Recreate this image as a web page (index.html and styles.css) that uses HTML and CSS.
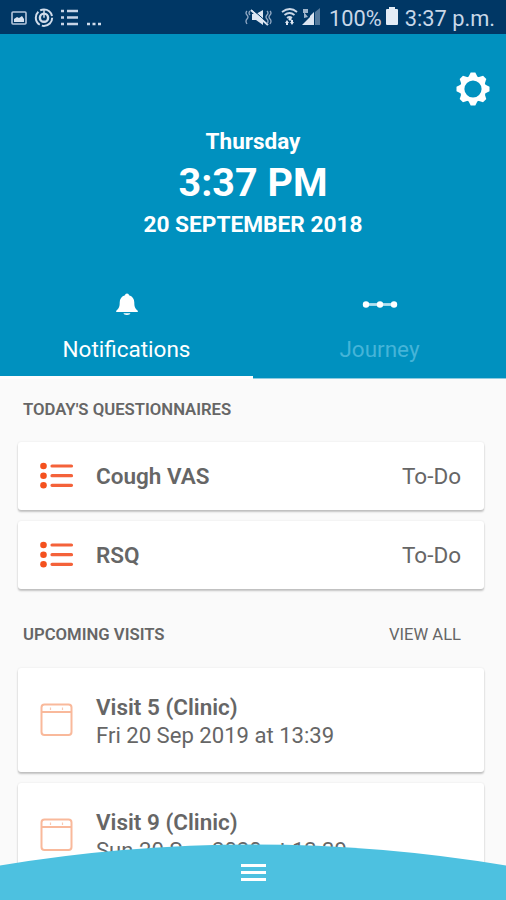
FILE: index.html
```html
<!DOCTYPE html>
<html lang="en">
<head>
<meta charset="utf-8">
<title>Notifications</title>
<link rel="stylesheet" href="styles.css">
</head>
<body>
<svg class="defs" width="0" height="0">
  <symbol id="list" viewBox="0 0 34 28">
    <g fill="#f4511e"><circle cx="3.5" cy="4" r="3.3"/><circle cx="3.5" cy="13.7" r="3.3"/><circle cx="3.5" cy="23.3" r="3.3"/></g>
    <path d="M12 4H31.5M12 13.7H31.5M12 23.3H31.5" stroke="#f4623a" stroke-width="3.2" stroke-linecap="round"/>
  </symbol>
  <symbol id="calendar" viewBox="0 0 34 34">
    <rect x="1.5" y="1.5" width="30" height="30.5" rx="3" fill="none" stroke="#f9b99b" stroke-width="2"/>
    <path d="M1.5 9H31.5" stroke="#f9b99b" stroke-width="2"/>
    <path d="M10.5 4.5V7M22.5 4.5V7" stroke="#f9c9b3" stroke-width="1.2"/>
  </symbol>
</svg>
<div class="screen">
  <div class="status">
    <svg class="status-left" width="110" height="34" viewBox="0 0 110 34">
      <rect x="12" y="12" width="14" height="12" rx="1" fill="none" stroke="#b4c6dc" stroke-width="1.6"/>
      <path d="M14 22v-3l3-2 2 1 3-2 2 3v3z" fill="#d7e2f0"/>
      <circle cx="44" cy="17.7" r="8.2" fill="none" stroke="#d0dceb" stroke-width="2" stroke-dasharray="15 2.2"/>
      <circle cx="44" cy="17.7" r="4.1" fill="none" stroke="#d0dceb" stroke-width="2.4"/>
      <path d="M44 17.7V10" stroke="#d0dceb" stroke-width="1.5"/>
      <path d="M61 11h3M61 17.5h3M61 24h3M67 11h11M67 17.5h11M67 24h11" stroke="#c7d4e6" stroke-width="2.6"/>
      <path d="M87 24h3M92.500 24h3M98 24h3" stroke="#d0dceb" stroke-width="2.6"/>
    </svg>
    <svg class="status-signal" width="78" height="34" viewBox="0 0 78 34">
      <g fill="#dce6f2">
        <path d="M7 14h4l7-4v15l-7-5H7z"/>
        <path d="M6 10L23 25" stroke="#dce6f2" stroke-width="2.2"/>
        <path d="M7 9L24 24" stroke="#003765" stroke-width="1"/>
        <path d="M2 11q-2 2 0 4t0 4 0 5M5 11q-2 2 0 4M22 11q2 2 0 4t0 4 0 5M25 11q2 2 0 4t0 4 0 5" fill="none" stroke="#91a9c4" stroke-width="1.3"/>
        <path d="M37 12q8-6 15 0M39.500 15q5-4 10 0M42 18q2.500-2 5 0" fill="none" stroke="#cbd8e7" stroke-width="1.8"/>
        <path d="M43 19l2-1.500 2 1.500-2 2zM40 23l2-3 2 3h-1v2h-2v-2zM45 22h1v-2h2v2h1l-2 3z"/>
        <path d="M57 25L65 17v8z"/><path d="M58 9h5v4h-5zM59 12l4 5-4 1z" fill="#9fb5cc"/>
        <path d="M65 16l4-4v13h-4z"/><path d="M70 12l5-4v17h-5z" fill="#53799c"/>
      </g>
    </svg>
    <span class="battery-text">100%</span>
    <svg class="battery" width="14" height="20" viewBox="0 0 14 20"><path d="M4 0h6v2h2q1 0 1 1v14q0 1-1 1H2q-1 0-1-1V3q0-1 1-1h2z" fill="#e3ecf6"/></svg>
    <span class="clock">3:37 p.m.</span>
  </div>
  <header class="header">
    <div class="tools">
      <svg width="36" height="36" viewBox="-18 -18 36 36">
        <g fill="#fff">
          <g id="teeth"><path id="tooth" d="M-4.600-12L-2.300-16.500H2.300L4.600-12V12L2.300 16.500H-2.300L-4.600 12z"/><use href="#tooth" transform="rotate(90)"/></g>
          <use href="#teeth" transform="rotate(45)"/>
          <circle r="13"/>
        </g>
        <circle r="8.600" fill="#0091bf"/>
      </svg>
    </div>
    <div class="day">Thursday</div>
    <div class="time">3:37 PM</div>
    <div class="date">20 SEPTEMBER 2018</div>
    <nav class="tabs">
      <a class="tab active">
        <svg width="24" height="24" viewBox="0 0 24 24" fill="#fff"><path d="M12 1.500q2 0 2 1.700c3.500 1 5.300 3.800 5.300 7.300 0 4 .7 6 3.500 8.300v1.300H1.200v-1.300c2.800-2.300 3.500-4.300 3.500-8.300C4.700 7 6.500 4.200 10 3.200q0-1.700 2-1.700zM8.500 21.300h7q-.3 1.700-3.500 1.700t-3.500-1.700z"/></svg>
        <span>Notifications</span>
      </a>
      <a class="tab">
        <svg width="36" height="24" viewBox="0 0 36 24" fill="#fff"><path d="M4 12.500H32" stroke="#b5e1f0" stroke-width="2.800"/><circle cx="4" cy="12.500" r="3.200"/><circle cx="18" cy="12.500" r="3.200"/><circle cx="32" cy="12.500" r="3.200"/></svg>
        <span>Journey</span>
      </a>
    </nav>
  </header>
  <main class="content">
    <div class="section first"><h2>TODAY'S QUESTIONNAIRES</h2></div>
    <div class="card task"><svg class="icon" width="34" height="28"><use href="#list"/></svg><b>Cough VAS</b><span class="state">To-Do</span></div>
    <div class="card task"><svg class="icon" width="34" height="28"><use href="#list"/></svg><b>RSQ</b><span class="state">To-Do</span></div>
    <div class="section second"><h2>UPCOMING VISITS</h2><span class="all">VIEW ALL</span></div>
    <div class="card visit"><svg class="icon" width="34" height="34"><use href="#calendar"/></svg><div><b>Visit 5 (Clinic)</b><p>Fri 20 Sep 2019 at 13:39</p></div></div>
    <div class="card visit"><svg class="icon" width="34" height="34"><use href="#calendar"/></svg><div><b>Visit 9 (Clinic)</b><p>Sun 20 Sep 2020 at 13:39</p></div></div>
  </main>
  <div class="menu">
    <svg width="506" height="57" viewBox="0 0 506 57"><path d="M0 22.500Q126 1.500 253 1.500T506 22.500V57H0z" fill="#4dc1e0"/><path d="M241 22.500H266M241 29.500H266M241 36.500H266" stroke="#fff" stroke-width="3"/></svg>
  </div>
</div>
</body>
</html>
```
FILE: styles.css
```css
* { box-sizing: border-box; }
body { margin: 0; font-family: Roboto, "Liberation Sans", sans-serif; color: #666; }
h2, p { margin: 0; }
.defs { position: absolute; }
.screen { position: relative; width: 506px; height: 900px; overflow: hidden; background: #fafafa; white-space: nowrap; }
.status { display: flex; align-items: center; height: 34px; background: #003765; color: #c8d7e8; font-size: 21.8px; padding-right: 11px; }
.status-left { margin-right: auto; }
.status-signal { margin-right: 6px; }
.battery-text { font-size: 21.8px; line-height: 34px; padding-top: 3px; }
.battery { margin: 0 6px 0 3px; }
.clock { line-height: 34px; padding-top: 3px; }
.header { height: 345px; background: #0091bf; color: #fff; text-align: center; }
.tools { height: 92px; padding: 37px 15px 0 0; display: flex; justify-content: flex-end; }
.day { font-size: 22.5px; font-weight: 700; line-height: 28px; padding-top: 1px; }
.time { font-size: 39.5px; font-weight: 700; line-height: 56px; }
.date { font-size: 22.7px; font-weight: 700; line-height: 28px; }
.tabs { display: flex; height: 140px; }
.tab { flex: 1; display: flex; flex-direction: column; align-items: center; padding-top: 53px; font-size: 22.5px; color: #45b4d8; border-bottom: 1px solid #8dcbe0; }
.tab span { line-height: 28px; margin-top: 19px; }
.tab.active { color: #fff; border-bottom: 3px solid #fdfdfd; }
.content { padding: 0 22px 0 18px; }
.section { display: flex; justify-content: space-between; align-items: center; padding: 0 23px 0 5px; font-size: 16.6px; }
.section h2 { font-size: 16.7px; font-weight: 600; }
.first { height: 63px; padding-bottom: 2px; }
.second { height: 79px; padding-top: 11px; }
.card { display: flex; align-items: center; background: #fff; border-radius: 3px; box-shadow: 0 2px 2px rgba(0,0,0,.22), 0 0 2px rgba(0,0,0,.1); padding: 0 23px 0 22px; font-size: 22.5px; }
.card b { font-weight: 600; }
.icon { margin-right: 22px; }
.task { height: 68px; margin-bottom: 11px; }
.task + .section { margin-top: -11px; }
.state { margin-left: auto; }
.visit { height: 104px; margin-bottom: 11px; line-height: 28px; }
.visit div { padding-top: 2px; }
.visit p { font-size: 22.1px; }
.menu { position: absolute; left: 0; bottom: 0; width: 506px; height: 57px; }
.menu svg { display: block; }
```
